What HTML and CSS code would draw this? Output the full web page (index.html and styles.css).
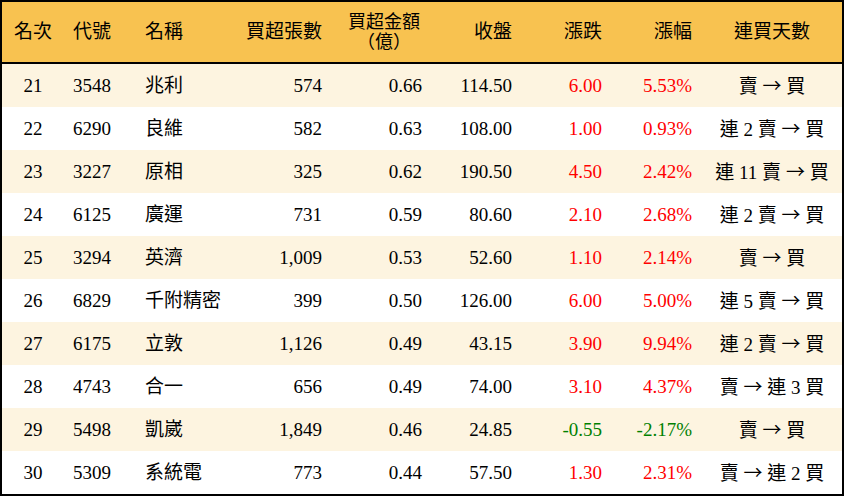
FILE: index.html
```html
<!DOCTYPE html>
<html lang="zh-Hant">
<head>
<meta charset="utf-8">
<link rel="stylesheet" href="styles.css">
</head>
<body>
<div class="frame">
<table class="rank">
  <colgroup>
    <col class="c-rank"><col class="c-code"><col class="c-name"><col class="c-vol"><col class="c-amt"><col class="c-close"><col class="c-chg"><col class="c-pct"><col class="c-days">
  </colgroup>
  <thead>
    <tr>
      <th class="ctr">名次</th>
      <th class="lft">代號</th>
      <th class="lft">名稱</th>
      <th class="rgt">買超張數</th>
      <th class="rgt"><span class="two"><span class="ln">買超金額</span><span class="ln">（億）</span></span></th>
      <th class="rgt">收盤</th>
      <th class="rgt">漲跌</th>
      <th class="rgt">漲幅</th>
      <th class="ctr">連買天數</th>
    </tr>
  </thead>
  <tbody>
    <tr><td class="ctr">21</td><td class="lft">3548</td><td class="lft">兆利</td><td class="rgt">574</td><td class="rgt">0.66</td><td class="rgt">114.50</td><td class="rgt up">6.00</td><td class="rgt up">5.53%</td><td class="ctr">賣 <span class="arr">→</span> 買</td></tr>
    <tr><td class="ctr">22</td><td class="lft">6290</td><td class="lft">良維</td><td class="rgt">582</td><td class="rgt">0.63</td><td class="rgt">108.00</td><td class="rgt up">1.00</td><td class="rgt up">0.93%</td><td class="ctr">連 2 賣 <span class="arr">→</span> 買</td></tr>
    <tr><td class="ctr">23</td><td class="lft">3227</td><td class="lft">原相</td><td class="rgt">325</td><td class="rgt">0.62</td><td class="rgt">190.50</td><td class="rgt up">4.50</td><td class="rgt up">2.42%</td><td class="ctr">連 11 賣 <span class="arr">→</span> 買</td></tr>
    <tr><td class="ctr">24</td><td class="lft">6125</td><td class="lft">廣運</td><td class="rgt">731</td><td class="rgt">0.59</td><td class="rgt">80.60</td><td class="rgt up">2.10</td><td class="rgt up">2.68%</td><td class="ctr">連 2 賣 <span class="arr">→</span> 買</td></tr>
    <tr><td class="ctr">25</td><td class="lft">3294</td><td class="lft">英濟</td><td class="rgt">1,009</td><td class="rgt">0.53</td><td class="rgt">52.60</td><td class="rgt up">1.10</td><td class="rgt up">2.14%</td><td class="ctr">賣 <span class="arr">→</span> 買</td></tr>
    <tr><td class="ctr">26</td><td class="lft">6829</td><td class="lft">千附精密</td><td class="rgt">399</td><td class="rgt">0.50</td><td class="rgt">126.00</td><td class="rgt up">6.00</td><td class="rgt up">5.00%</td><td class="ctr">連 5 賣 <span class="arr">→</span> 買</td></tr>
    <tr><td class="ctr">27</td><td class="lft">6175</td><td class="lft">立敦</td><td class="rgt">1,126</td><td class="rgt">0.49</td><td class="rgt">43.15</td><td class="rgt up">3.90</td><td class="rgt up">9.94%</td><td class="ctr">連 2 賣 <span class="arr">→</span> 買</td></tr>
    <tr><td class="ctr">28</td><td class="lft">4743</td><td class="lft">合一</td><td class="rgt">656</td><td class="rgt">0.49</td><td class="rgt">74.00</td><td class="rgt up">3.10</td><td class="rgt up">4.37%</td><td class="ctr">賣 <span class="arr">→</span> 連 3 買</td></tr>
    <tr><td class="ctr">29</td><td class="lft">5498</td><td class="lft">凱崴</td><td class="rgt">1,849</td><td class="rgt">0.46</td><td class="rgt">24.85</td><td class="rgt down">-0.55</td><td class="rgt down">-2.17%</td><td class="ctr">賣 <span class="arr">→</span> 買</td></tr>
    <tr><td class="ctr">30</td><td class="lft">5309</td><td class="lft">系統電</td><td class="rgt">773</td><td class="rgt">0.44</td><td class="rgt">57.50</td><td class="rgt up">1.30</td><td class="rgt up">2.31%</td><td class="ctr">賣 <span class="arr">→</span> 連 2 買</td></tr>
  </tbody>
</table>
</div>
</body>
</html>
```
FILE: styles.css
```css
html, body {
  margin: 0;
  padding: 0;
  background: #ffffff;
}
.frame {
  width: 840px;
  border: 2px solid #000000;
}
.rank {
  width: 840px;
  border-collapse: collapse;
  table-layout: fixed;
  font-family: "Liberation Serif", "Noto Sans CJK TC", serif;
  font-size: 19px;
  color: #000000;
}
.c-rank { width: 60px; }
.c-code { width: 72px; }
.c-name { width: 98px; }
.c-vol { width: 100px; }
.c-amt { width: 100px; }
.c-close { width: 90px; }
.c-chg { width: 90px; }
.c-pct { width: 90px; }
.c-days { width: 140px; }
.rank th {
  height: 60px;
  background: #f8c250;
  font-weight: normal;
  border-bottom: 2px solid #000000;
  padding: 0;
  vertical-align: middle;
  line-height: 22px;
}
.rank td {
  height: 43px;
  padding: 0;
  vertical-align: middle;
  line-height: 22px;
  white-space: nowrap;
}
.rank tbody tr:nth-child(odd) td {
  background: #fdf4e0;
}
.ctr { text-align: center; }
.lft { text-align: left; }
.rgt { text-align: right; }
.rank td.lft, .rank th.lft { padding-left: 11px; }
.rank td.rgt, .rank th.rgt { padding-right: 10px; }
.rank th.ctr:first-child, .rank td.ctr:first-child { padding-left: 2px; }
.two {
  display: inline-block;
  text-align: center;
  margin-right: 2px;
  vertical-align: middle;
}
.ln {
  display: block;
  height: 20px;
  line-height: 20px;
  font-size: 18px;
}
.arr {
  font-family: "Noto Sans CJK TC", sans-serif;
}
.up { color: #ff0000; }
.down { color: #008000; }
```
